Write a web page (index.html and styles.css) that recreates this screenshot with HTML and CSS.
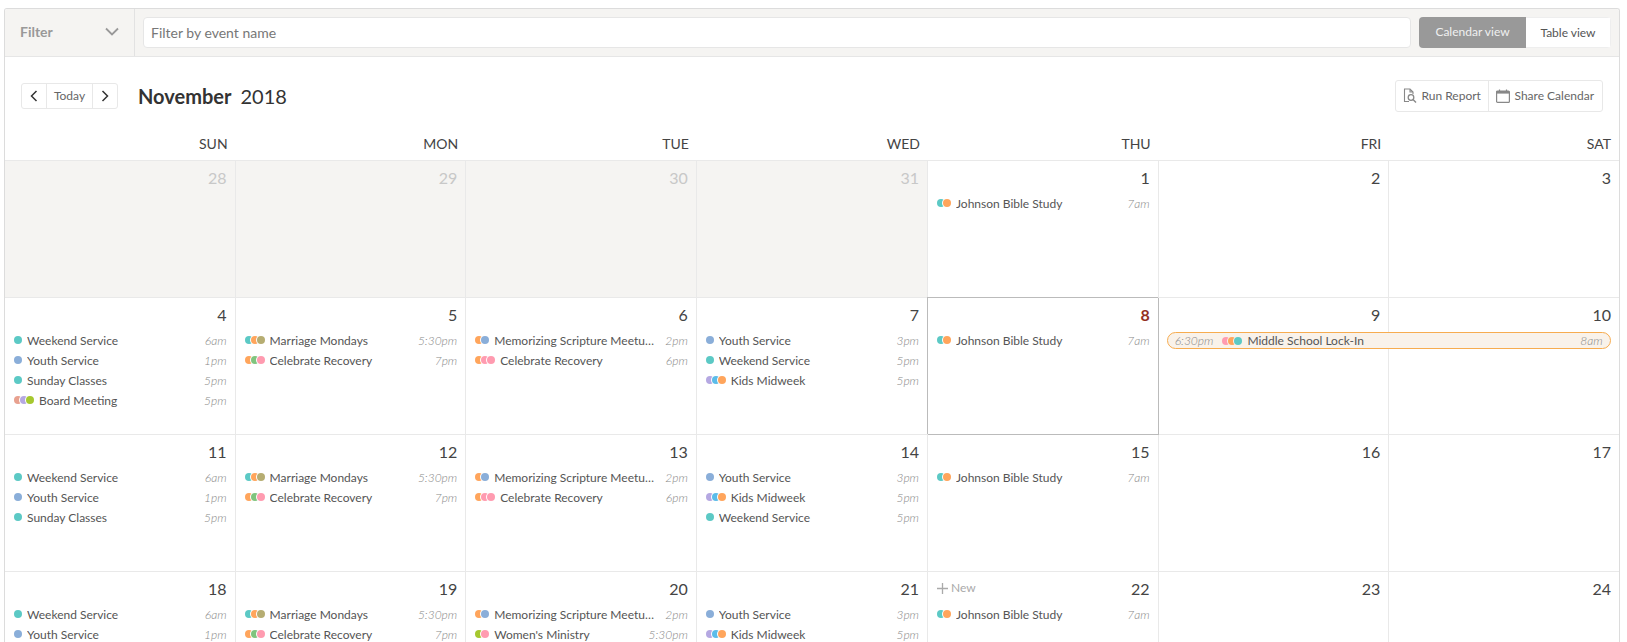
FILE: index.html
```html
<!DOCTYPE html>
<html lang="en">
<head>
<meta charset="utf-8">
<title>Calendar</title>
<link rel="stylesheet" href="styles.css">
</head>
<body>
<div class="frame">
  <div class="filterbar">
    <div class="filter-select"><span>Filter</span>
      <svg class="chev-down" width="14" height="9" viewBox="0 0 14 9"><path d="M1 1.5l6 6 6-6" fill="none" stroke="#999" stroke-width="1.8"/></svg>
    </div>
    <div class="filter-main">
      <div class="filter-input">Filter by event name</div>
      <div class="toggle"><span class="toggle-on">Calendar view</span><span class="toggle-off">Table view</span></div>
    </div>
  </div>

  <div class="toolbar">
    <div class="toolbar-left">
      <div class="nav">
        <span class="nav-arrow"><svg width="8" height="12" viewBox="0 0 8 12"><path d="M6.5 1L1.5 6l5 5" fill="none" stroke="#333" stroke-width="1.5"/></svg></span>
        <span class="nav-today">Today</span>
        <span class="nav-arrow"><svg width="8" height="12" viewBox="0 0 8 12"><path d="M1.5 1l5 5-5 5" fill="none" stroke="#333" stroke-width="1.5"/></svg></span>
      </div>
      <div class="title"><b>November</b><span>2018</span></div>
    </div>
    <div class="actions">
      <span class="action action-report"><svg width="14" height="15" viewBox="0 0 14 15"><path d="M6 13.5H1.5V1h5.5l3 3v2M7 1v3h3" fill="none" stroke="#888" stroke-width="1.1"/><circle cx="8" cy="9.5" r="2.8" fill="none" stroke="#888" stroke-width="1.3"/><path d="M10 11.5l3 3" stroke="#888" stroke-width="1.4"/></svg>Run Report</span>
      <span class="action action-share"><svg width="14" height="14" viewBox="0 0 14 14"><rect x="0.6" y="2" width="12.8" height="11.4" rx="1" fill="none" stroke="#888" stroke-width="1.2"/><rect x="0.6" y="2" width="12.8" height="2.6" fill="#888"/><path d="M3.5 0.5v2M10.5 0.5v2" stroke="#888" stroke-width="1.2"/></svg>Share Calendar</span>
    </div>
  </div>

  <div class="weekdays">
    <div>SUN</div><div>MON</div><div>TUE</div><div>WED</div><div>THU</div><div>FRI</div><div>SAT</div>
  </div>

  <div class="month">
    <div class="cell muted"><div class="num">28</div></div>
    <div class="cell muted"><div class="num">29</div></div>
    <div class="cell muted"><div class="num">30</div></div>
    <div class="cell muted"><div class="num">31</div></div>
    <div class="cell"><div class="num">1</div>
      <div class="ev"><i class="dots"><u class="teal"></u><u class="orange"></u></i><span class="name">Johnson Bible Study</span><em>7am</em></div>
    </div>
    <div class="cell"><div class="num">2</div></div>
    <div class="cell"><div class="num">3</div></div>

    <div class="cell"><div class="num">4</div>
      <div class="ev"><i class="dots"><u class="teal"></u></i><span class="name">Weekend Service</span><em>6am</em></div>
      <div class="ev"><i class="dots"><u class="blue"></u></i><span class="name">Youth Service</span><em>1pm</em></div>
      <div class="ev"><i class="dots"><u class="teal"></u></i><span class="name">Sunday Classes</span><em>5pm</em></div>
      <div class="ev"><i class="dots"><u class="salmon"></u><u class="lav"></u><u class="lime"></u></i><span class="name">Board Meeting</span><em>5pm</em></div>
    </div>
    <div class="cell"><div class="num">5</div>
      <div class="ev"><i class="dots"><u class="teal"></u><u class="orange"></u><u class="olive"></u></i><span class="name">Marriage Mondays</span><em>5:30pm</em></div>
      <div class="ev"><i class="dots"><u class="orange"></u><u class="green"></u><u class="pink"></u></i><span class="name">Celebrate Recovery</span><em>7pm</em></div>
    </div>
    <div class="cell"><div class="num">6</div>
      <div class="ev"><i class="dots"><u class="orange"></u><u class="blue"></u></i><span class="name">Memorizing Scripture Meetup Group</span><em>2pm</em></div>
      <div class="ev"><i class="dots"><u class="orange"></u><u class="pink"></u><u class="pink"></u></i><span class="name">Celebrate Recovery</span><em>6pm</em></div>
    </div>
    <div class="cell"><div class="num">7</div>
      <div class="ev"><i class="dots"><u class="blue"></u></i><span class="name">Youth Service</span><em>3pm</em></div>
      <div class="ev"><i class="dots"><u class="teal"></u></i><span class="name">Weekend Service</span><em>5pm</em></div>
      <div class="ev"><i class="dots"><u class="lav"></u><u class="sky"></u><u class="orange"></u></i><span class="name">Kids Midweek</span><em>5pm</em></div>
    </div>
    <div class="cell today"><div class="num">8</div>
      <div class="ev"><i class="dots"><u class="teal"></u><u class="orange"></u></i><span class="name">Johnson Bible Study</span><em>7am</em></div>
    </div>
    <div class="cell has-span"><div class="num">9</div>
      <div class="span-ev"><em>6:30pm</em><i class="dots"><u class="pink"></u><u class="orange"></u><u class="teal"></u></i><span class="name">Middle School Lock-In</span><em class="span-end">8am</em></div>
    </div>
    <div class="cell"><div class="num">10</div></div>

    <div class="cell"><div class="num">11</div>
      <div class="ev"><i class="dots"><u class="teal"></u></i><span class="name">Weekend Service</span><em>6am</em></div>
      <div class="ev"><i class="dots"><u class="blue"></u></i><span class="name">Youth Service</span><em>1pm</em></div>
      <div class="ev"><i class="dots"><u class="teal"></u></i><span class="name">Sunday Classes</span><em>5pm</em></div>
    </div>
    <div class="cell"><div class="num">12</div>
      <div class="ev"><i class="dots"><u class="teal"></u><u class="orange"></u><u class="olive"></u></i><span class="name">Marriage Mondays</span><em>5:30pm</em></div>
      <div class="ev"><i class="dots"><u class="orange"></u><u class="green"></u><u class="pink"></u></i><span class="name">Celebrate Recovery</span><em>7pm</em></div>
    </div>
    <div class="cell"><div class="num">13</div>
      <div class="ev"><i class="dots"><u class="orange"></u><u class="blue"></u></i><span class="name">Memorizing Scripture Meetup Group</span><em>2pm</em></div>
      <div class="ev"><i class="dots"><u class="orange"></u><u class="pink"></u><u class="pink"></u></i><span class="name">Celebrate Recovery</span><em>6pm</em></div>
    </div>
    <div class="cell"><div class="num">14</div>
      <div class="ev"><i class="dots"><u class="blue"></u></i><span class="name">Youth Service</span><em>3pm</em></div>
      <div class="ev"><i class="dots"><u class="lav"></u><u class="sky"></u><u class="orange"></u></i><span class="name">Kids Midweek</span><em>5pm</em></div>
      <div class="ev"><i class="dots"><u class="teal"></u></i><span class="name">Weekend Service</span><em>5pm</em></div>
    </div>
    <div class="cell"><div class="num">15</div>
      <div class="ev"><i class="dots"><u class="teal"></u><u class="orange"></u></i><span class="name">Johnson Bible Study</span><em>7am</em></div>
    </div>
    <div class="cell"><div class="num">16</div></div>
    <div class="cell"><div class="num">17</div></div>

    <div class="cell"><div class="num">18</div>
      <div class="ev"><i class="dots"><u class="teal"></u></i><span class="name">Weekend Service</span><em>6am</em></div>
      <div class="ev"><i class="dots"><u class="blue"></u></i><span class="name">Youth Service</span><em>1pm</em></div>
    </div>
    <div class="cell"><div class="num">19</div>
      <div class="ev"><i class="dots"><u class="teal"></u><u class="orange"></u><u class="olive"></u></i><span class="name">Marriage Mondays</span><em>5:30pm</em></div>
      <div class="ev"><i class="dots"><u class="orange"></u><u class="green"></u><u class="pink"></u></i><span class="name">Celebrate Recovery</span><em>7pm</em></div>
    </div>
    <div class="cell"><div class="num">20</div>
      <div class="ev"><i class="dots"><u class="orange"></u><u class="blue"></u></i><span class="name">Memorizing Scripture Meetup Group</span><em>2pm</em></div>
      <div class="ev"><i class="dots"><u class="lime"></u><u class="pink"></u></i><span class="name">Women's Ministry</span><em>5:30pm</em></div>
    </div>
    <div class="cell"><div class="num">21</div>
      <div class="ev"><i class="dots"><u class="blue"></u></i><span class="name">Youth Service</span><em>3pm</em></div>
      <div class="ev"><i class="dots"><u class="lav"></u><u class="sky"></u><u class="orange"></u></i><span class="name">Kids Midweek</span><em>5pm</em></div>
    </div>
    <div class="cell"><div class="num num-new"><span class="new"><svg width="11" height="11" viewBox="0 0 11 11"><path d="M5.5 0v11M0 5.5h11" stroke="#aaa" stroke-width="1.3"/></svg>New</span>22</div>
      <div class="ev"><i class="dots"><u class="teal"></u><u class="orange"></u></i><span class="name">Johnson Bible Study</span><em>7am</em></div>
    </div>
    <div class="cell"><div class="num">23</div></div>
    <div class="cell"><div class="num">24</div></div>
  </div>
</div>
</body>
</html>
```

FILE: styles.css
```css
html, body {
  margin: 0;
  height: 100%;
  overflow: hidden;
  background: #fff;
}
body {
  padding: 8px 7px 0 4px;
  box-sizing: border-box;
  font-family: Lato, "Open Sans", sans-serif;
  color: #444;
  font-size: 12px;
}
.frame {
  border: 1px solid #dcdcdc;
  border-bottom: 0;
  border-radius: 3px 3px 0 0;
  height: 100%;
  box-sizing: border-box;
  overflow: hidden;
}
.filterbar {
  display: flex;
  height: 47px;
  background: #f5f4f2;
  border-bottom: 1px solid #e6e6e6;
}
.filter-select {
  width: 130px;
  flex: none;
  box-sizing: border-box;
  padding: 0 15px;
  display: flex;
  align-items: center;
  justify-content: space-between;
  border-right: 1px solid #e2e2e2;
  font-size: 14px;
  font-weight: 700;
  color: #999;
  padding-bottom: 2px;
}
.filter-main {
  flex: 1;
  display: flex;
  align-items: flex-start;
  padding: 8px 8px 0 8px;
  gap: 8px;
}
.filter-input {
  flex: 1;
  height: 31px;
  box-sizing: border-box;
  border: 1px solid #e6e6e6;
  border-radius: 4px;
  background: #fff;
  padding: 0 7px;
  line-height: 29px;
  font-size: 14px;
  color: #777;
}
.toggle {
  display: flex;
  height: 31px;
  width: 192px;
  flex: none;
  border-radius: 4px;
  overflow: hidden;
  line-height: 30px;
  font-size: 12px;
  text-align: center;
}
.toggle-on {
  width: 107px;
  background: #999;
  color: #f0f0f0;
}
.toggle-off {
  flex: 1;
  background: #fff;
  color: #555;
  border: 1px solid #eee;
  border-left: 0;
  line-height: 29px;
}
.toolbar {
  height: 77px;
  box-sizing: border-box;
  display: flex;
  align-items: center;
  justify-content: space-between;
  padding: 0 16px;
}
.toolbar-left {
  display: flex;
  align-items: center;
  gap: 20px;
}
.nav {
  display: flex;
  height: 26px;
  box-sizing: border-box;
  border: 1px solid #e8e8e8;
  border-radius: 3px;
  color: #666;
}
.nav-arrow {
  width: 24px;
  display: flex;
  align-items: center;
  justify-content: center;
}
.nav-today {
  width: 45px;
  text-align: center;
  line-height: 24px;
  border-left: 1px solid #e8e8e8;
  border-right: 1px solid #e8e8e8;
}
.title {
  display: flex;
  gap: 9px;
  font-size: 20px;
  color: #333;
}
.title b {
  font-weight: 700;
}
.actions {
  display: flex;
  height: 32px;
  box-sizing: border-box;
  border: 1px solid #e8e8e8;
  border-radius: 3px;
  color: #666;
}
.action {
  display: flex;
  align-items: center;
  gap: 5px;
  padding: 0 7px;
  white-space: nowrap;
}
.action svg {
  flex: none;
}
.action-report {
  width: 93px;
  flex: none;
  box-sizing: border-box;
  border-right: 1px solid #e8e8e8;
}
.action-share {
  padding: 0 8px 0 7px;
}
.weekdays,
.month {
  display: grid;
  grid-template-columns: 230.6px 230.6px 230.6px 231.2px 230.7px 230.6px 1fr;
}
.weekdays {
  height: 27px;
  box-sizing: border-box;
  border-bottom: 1px solid #e9e9e9;
  font-size: 14px;
  color: #444;
  text-align: right;
  line-height: 20px;
}
.weekdays div {
  padding-right: 8px;
}
.month {
  grid-auto-rows: 137px;
}
.cell {
  min-width: 0;
  box-sizing: border-box;
  border-right: 1px solid #e9e9e9;
  border-bottom: 1px solid #e9e9e9;
  padding: 7px 8px 0 9px;
}
.cell:nth-child(7n) {
  border-right: 0;
}
.muted {
  background: #f5f4f2;
}
.muted .num {
  color: #c8c8c8;
}
.today {
  border-color: #bbb;
  box-shadow: -1px -1px 0 #bbb;
  position: relative;
}
.today .num {
  color: #94301f;
  font-weight: 700;
}
.has-span {
  position: relative;
}
.num {
  font-size: 16px;
  line-height: 20px;
  text-align: right;
  color: #444;
  margin-bottom: 5px;
}
.num-new {
  display: flex;
  justify-content: space-between;
}
.new {
  display: flex;
  align-items: center;
  gap: 3px;
  font-size: 12px;
  color: #aaa;
  margin-top: -2px;
}
.ev {
  display: flex;
  align-items: center;
  height: 20px;
  color: #555;
  white-space: nowrap;
}
.name {
  flex: 1;
  min-width: 0;
  overflow: hidden;
  text-overflow: ellipsis;
}
em {
  flex: none;
  margin-left: 11px;
  font-style: italic;
  font-weight: 300;
  color: #888;
}
.dots {
  display: flex;
  flex: none;
  margin-right: 5px;
}
.dots u {
  display: block;
  width: 8px;
  height: 8px;
  border-radius: 50%;
  box-shadow: 0 0 0 1px #fff;
  text-decoration: none;
}
.dots u + u {
  margin-left: -2px;
}
.dots u:first-child {
  box-shadow: none;
}
.teal { background: #5cc9c5; }
.blue { background: #8aaed9; }
.salmon { background: #e8a18f; }
.lav { background: #b5a8e2; }
.lime { background: #a6c82f; }
.orange { background: #ffa55c; }
.olive { background: #b6ad72; }
.green { background: #80c47e; }
.pink { background: #ff9bb0; }
.sky { background: #5bbce9; }
.span-ev {
  position: absolute;
  left: 8px;
  top: 34px;
  width: 442px;
  height: 15px;
  display: flex;
  align-items: center;
  border: 1px solid #f7ac4f;
  border-radius: 9px;
  background: #f9f2ea;
  color: #555;
  z-index: 1;
  white-space: nowrap;
}
.span-ev > em:first-child {
  margin: 0 9px 0 7px;
}
.span-ev .dots u {
  box-shadow: 0 0 0 1px #f9f2ea;
}
.span-ev .dots u:first-child {
  box-shadow: none;
}
.span-end {
  margin-right: 7px;
}
```
